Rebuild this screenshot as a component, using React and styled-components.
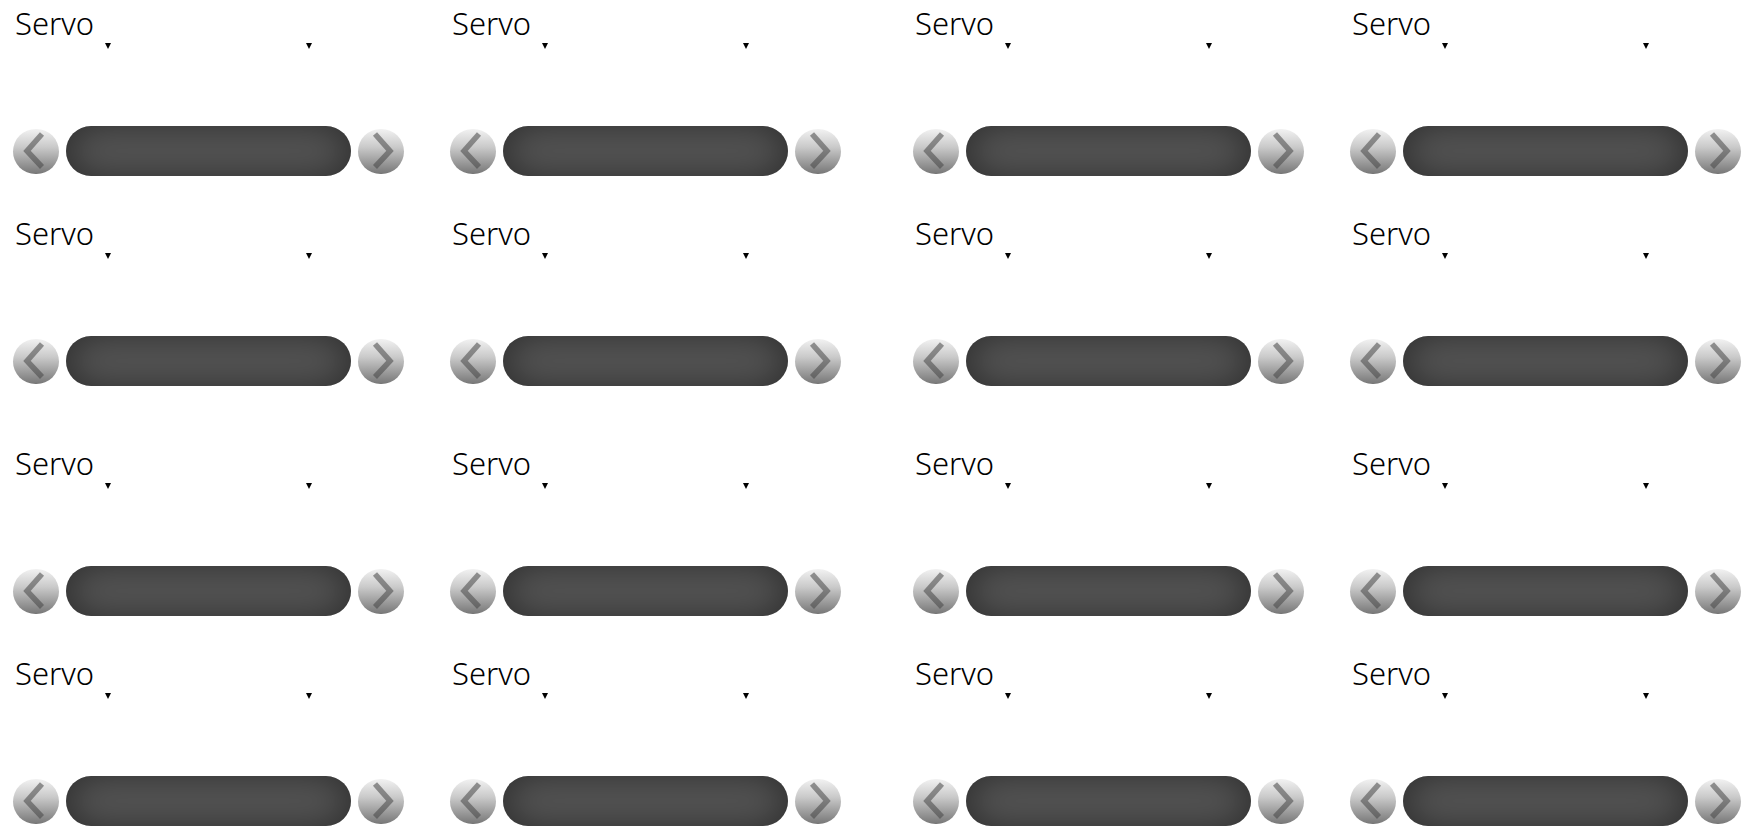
import React from "react";
import styled, { createGlobalStyle } from "styled-components";

const Global = createGlobalStyle`
  html, body { margin: 0; padding: 0; background: #fff; overflow: hidden; }
  body { font-family: "Noto Sans", "Open Sans", sans-serif; }
`;

const Page = styled.div`
  display: grid;
  grid-template-columns: repeat(2, 854px);
  column-gap: 46px;
  row-gap: 50px;
`;

const Group = styled.div`
  display: grid;
  grid-template-columns: repeat(2, 417px);
  column-gap: 20px;
  row-gap: 30px;
`;

const Cell = styled.section`
  height: 180px;
  padding-left: 13px;
  box-sizing: border-box;
`;

const Header = styled.div`
  display: flex;
  align-items: flex-start;
  height: 126px;
`;

const Title = styled.h2`
  margin: 0 0 0 2px;
  width: 90px;
  font-size: 31px;
  line-height: 47px;
  font-weight: 300;
  color: #000;
`;

const Caret = styled.span`
  width: 0;
  height: 0;
  margin-top: 43px;
  margin-left: ${(p) => p.$offset}px;
  border-left: 3px solid transparent;
  border-right: 3px solid transparent;
  border-top: 6px solid #000;
`;

const Controls = styled.div`
  display: flex;
  align-items: center;
  gap: 7.6px;
`;

const Round = styled.button`
  width: 45.7px;
  height: 45.7px;
  margin-top: 1px;
  padding: 0;
  border: 0;
  border-radius: 50%;
  background: linear-gradient(to bottom, #f2f2f2 0%, #cacaca 40%, #777777 100%);
  svg { display: block; }
`;

const Track = styled.div`
  width: 284.4px;
  height: 50px;
  border-radius: 25px;
  background: #575757;
  box-shadow: inset 0 0 38px rgba(0, 0, 0, 0.5);
`;

const Chevron = ({ points }) => (
  <svg width="46" height="46" viewBox="0 0 46 46" fill="none">
    <polyline points={points} stroke="rgba(70,70,70,0.55)" strokeWidth="5.5" />
  </svg>
);

const ServoCell = () => (
  <Cell>
    <Header>
      <Title>Servo</Title>
      <Caret $offset={0} />
      <Caret $offset={195} />
    </Header>
    <Controls>
      <Round aria-label="previous"><Chevron points="29,5 14,22 29,38" /></Round>
      <Track />
      <Round aria-label="next"><Chevron points="17,5 32,22 17,38" /></Round>
    </Controls>
  </Cell>
);

const ServoGroup = () => (
  <Group>
    {[0, 1, 2, 3].map((i) => <ServoCell key={i} />)}
  </Group>
);

export default function App() {
  return (
    <>
      <Global />
      <Page>
        {[0, 1, 2, 3].map((i) => <ServoGroup key={i} />)}
      </Page>
    </>
  );
}
